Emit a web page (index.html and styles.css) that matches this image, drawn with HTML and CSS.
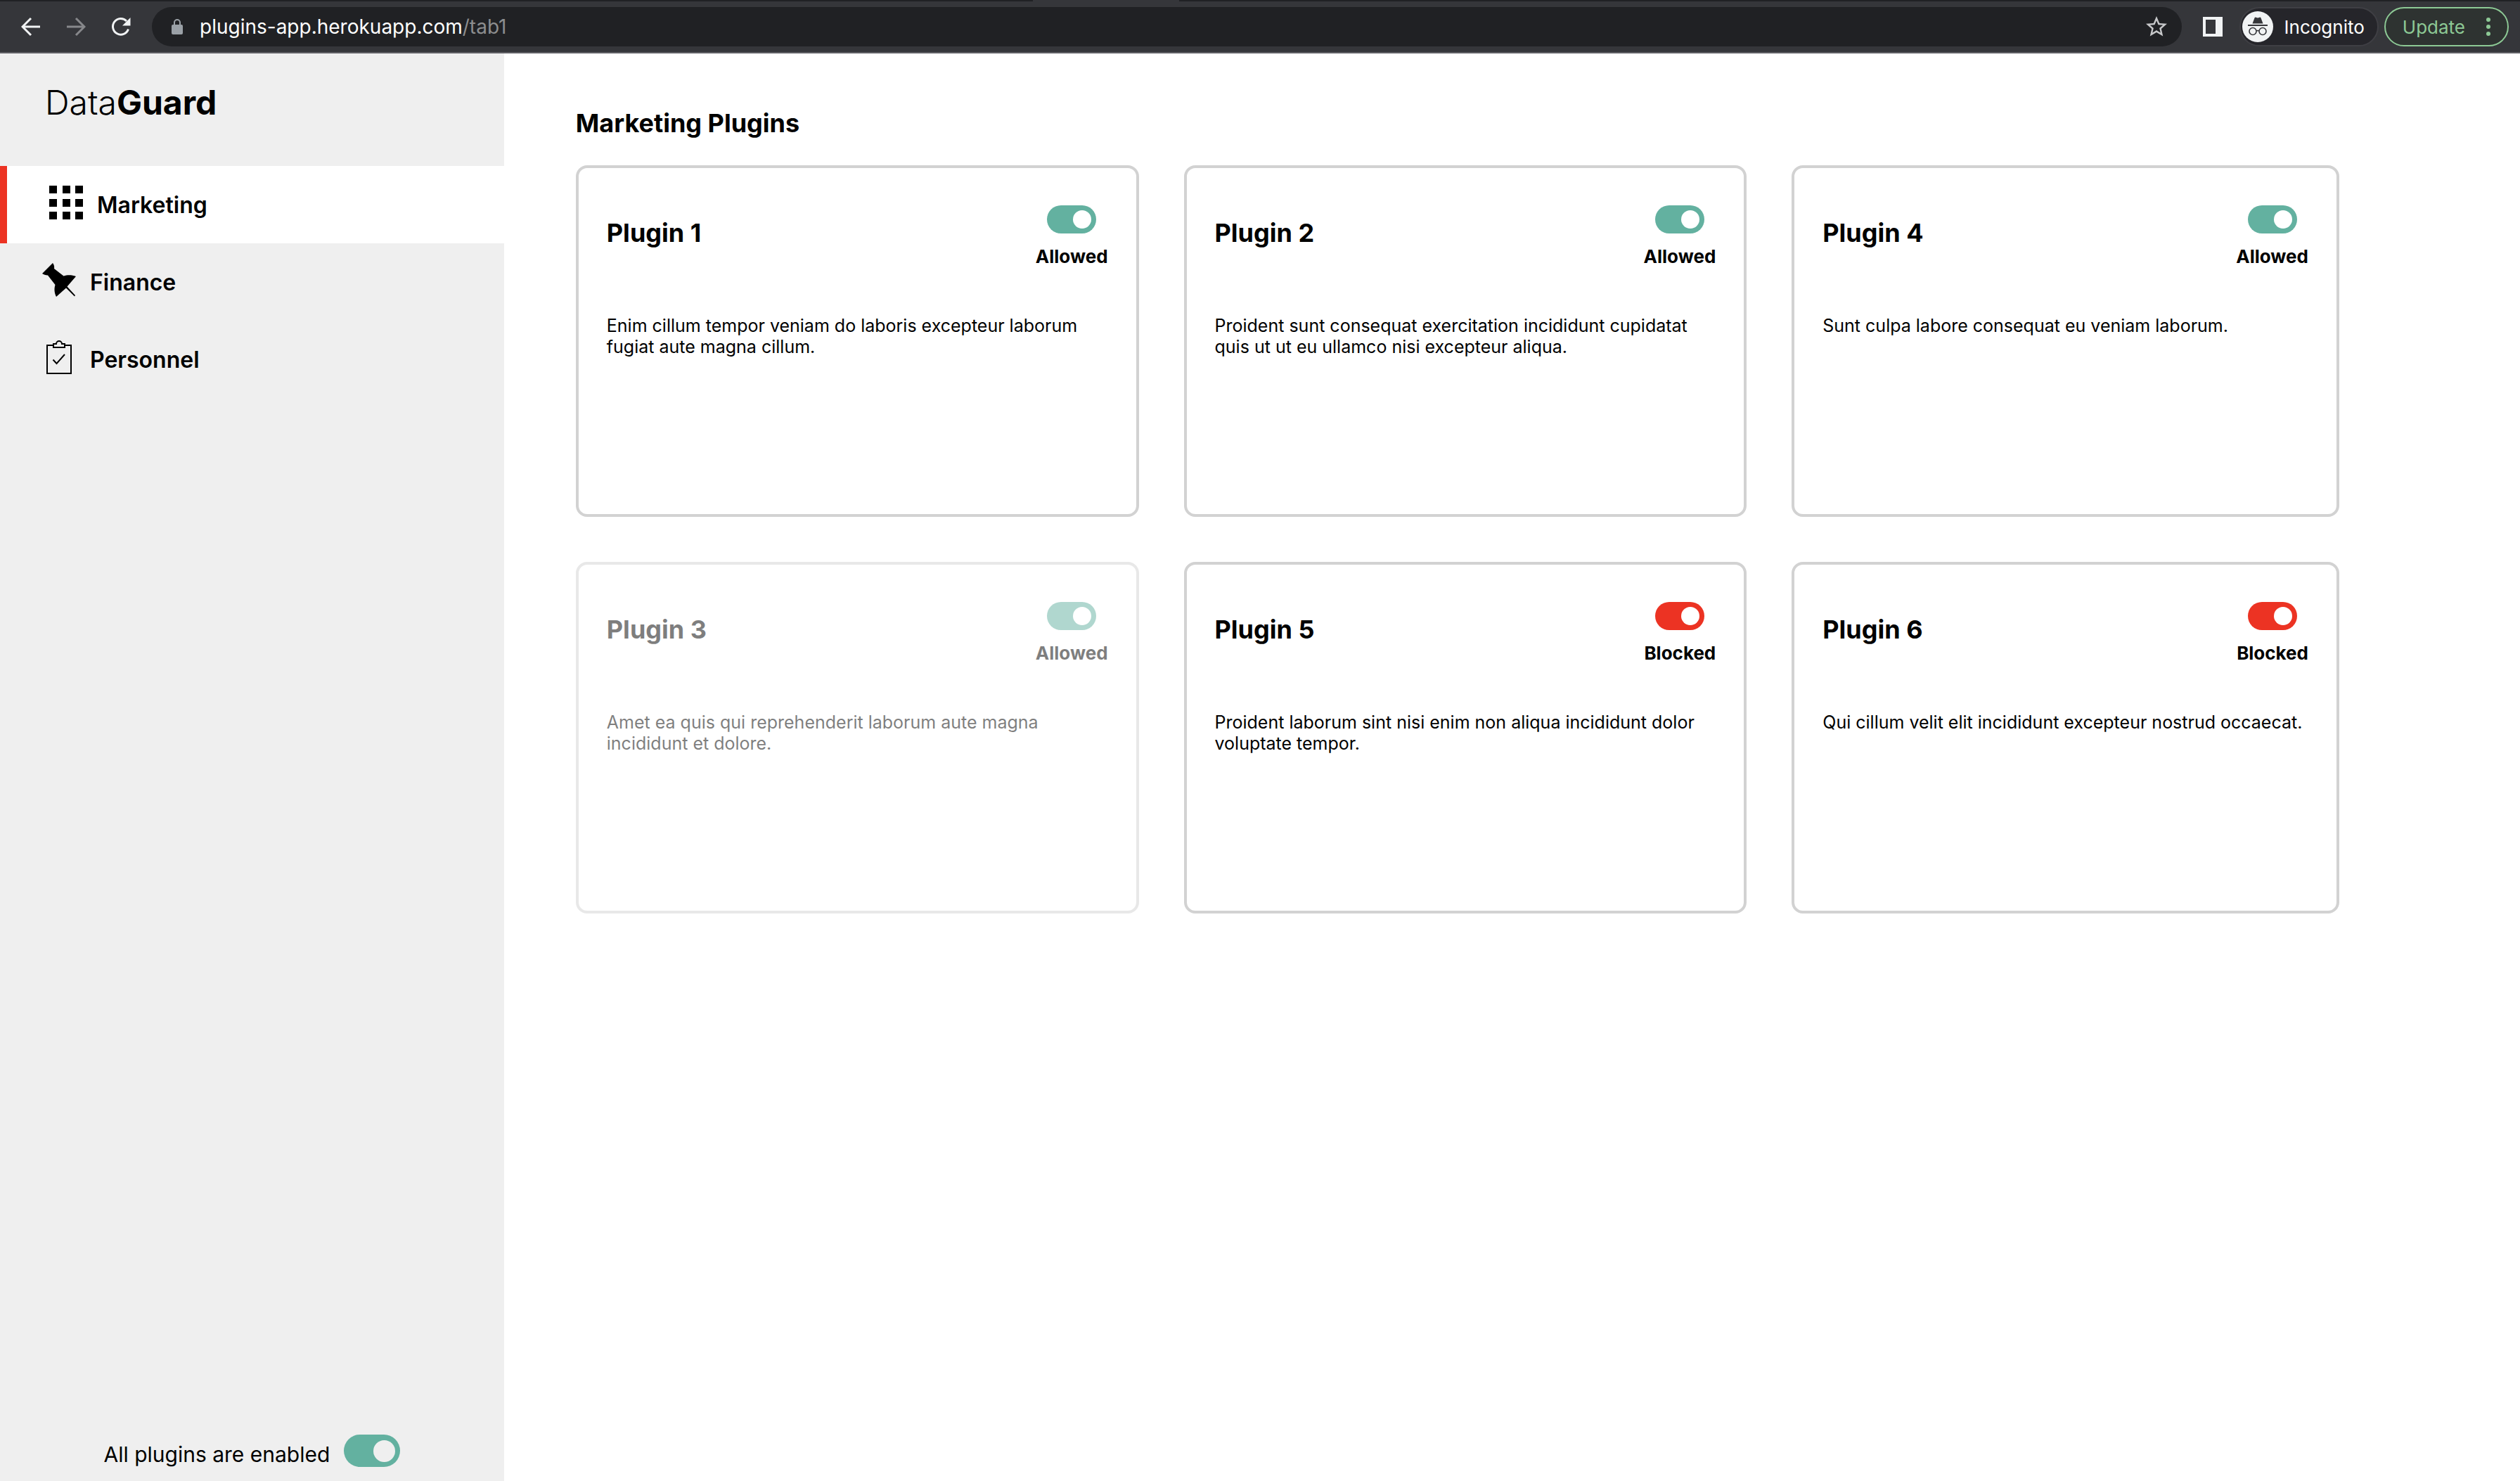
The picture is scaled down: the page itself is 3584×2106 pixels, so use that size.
FILE: index.html
```
<!DOCTYPE html>
<html lang="en">
<head>
<meta charset="utf-8">
<title>DataGuard</title>
<link rel="stylesheet" href="styles.css">
</head>
<body>
<div class="tab-strip"><div class="active-tab"></div></div>
<header class="browser">
  <div class="nav-buttons">
    <button class="icon-btn" aria-label="Back"><svg viewBox="0 0 28 28"><path d="M27 14H3M14 2 2 14l12 12"/></svg></button>
    <button class="icon-btn dim" aria-label="Forward"><svg viewBox="0 0 28 28"><path d="M1 14h24M14 2l12 12-12 12"/></svg></button>
    <button class="icon-btn" aria-label="Reload"><svg viewBox="0 0 28 28"><path d="M24.500 17.500A11.300 11.300 0 1 1 22 6"/><path class="solid" d="M27.500 1v11.500H16z"/></svg></button>
  </div>
  <div class="omnibox">
    <svg class="lock" viewBox="0 0 16 22"><path fill="#9aa0a6" d="M2 8h12a2 2 0 0 1 2 2v10a2 2 0 0 1-2 2H2a2 2 0 0 1-2-2V10a2 2 0 0 1 2-2z"/><path fill="none" stroke="#9aa0a6" stroke-width="2" d="M4 9V5a4 4 0 0 1 8 0v4"/></svg>
    <span class="url">plugins-app.herokuapp.com<span class="path">/tab1</span></span>
    <button class="star" aria-label="Bookmark this tab"><svg viewBox="0 0 24 24"><path fill="#c7c8ca" d="M22 9.240l-7.190-.620L12 2 9.190 8.630 2 9.240l5.460 4.730L5.820 21 12 17.270 18.180 21l-1.630-7.030zM12 15.400l-3.760 2.270 1-4.280-3.320-2.880 4.380-.380L12 6.100l1.710 4.040 4.380.380-3.320 2.880 1 4.280z"/></svg></button>
  </div>
  <button class="panel" aria-label="Side panel"><svg viewBox="0 0 28 28"><path fill="#f1f3f4" fill-rule="evenodd" d="M0 0h28v28H0zM4 4v20h14V4z"/></svg></button>
  <div class="profile">
    <svg viewBox="0 0 44 44"><circle cx="22" cy="22" r="22" fill="#f1f3f4"/><path fill="#35363a" d="M14.500 17.500l3-8q.500-1.200 2-.800l2.500.800 2.500-.800q1.500-.400 2 .800l3 8zM8 19h28v2H8z"/><g fill="none" stroke="#35363a" stroke-width="1.600"><circle cx="15" cy="28.500" r="5"/><circle cx="29" cy="28.500" r="5"/><path d="M20 28q2-1 4 0"/></g></svg>
    <span>Incognito</span>
  </div>
  <button class="update"><span>Update</span><svg viewBox="0 0 6 26"><circle cx="3" cy="3" r="3"/><circle cx="3" cy="13" r="3"/><circle cx="3" cy="23" r="3"/></svg></button>
</header>
<div class="app">
  <aside class="sidebar">
    <div class="logo">Data<b>Guard</b></div>
    <nav class="menu">
      <a class="active" href="#marketing"><svg viewBox="0 0 48 48"><path d="M0 0h11v11H0zM19 0h11v11H19zM37 0h11v11H37zM0 19h11v11H0zM19 19h11v11H19zM37 19h11v11H37zM0 37h11v11H0zM19 37h11v11H19zM37 37h11v11H37z"/></svg>Marketing</a>
      <a href="#finance"><svg viewBox="0 0 48 48"><path d="M15 0C17 3 17.500 5 17 8L30.500 18.500C36 16.500 43 17 48 19L35.500 33.500 47 46 46 47.500 34 35.500 20 48C17 42 17 36 18.500 31L8 17.500C5 17.500 2 16.500 0 15z"/></svg>Finance</a>
      <a href="#personnel"><svg viewBox="0 0 48 48"><g fill="none" stroke="#000" stroke-width="2"><path d="M16 7H7v40h34V7h-9"/><path d="M16 5h4a4 4 0 0 1 8 0h4v5H16z"/><path d="M15.500 27.500l5 5.500L32 20"/></g></svg>Personnel</a>
    </nav>
    <label class="all"><span>All plugins are enabled</span><input type="checkbox" class="toggle large" checked></label>
  </aside>
  <main class="content">
    <h1>Marketing Plugins</h1>
    <div class="cards">
      <article class="card"><div class="card-head"><h2>Plugin 1</h2><label class="state"><input type="checkbox" class="toggle" checked>Allowed</label></div><p>Enim cillum tempor veniam do laboris excepteur laborum fugiat aute magna cillum.</p></article>
      <article class="card"><div class="card-head"><h2>Plugin 2</h2><label class="state"><input type="checkbox" class="toggle" checked>Allowed</label></div><p>Proident sunt consequat exercitation incididunt cupidatat quis ut ut eu ullamco nisi excepteur aliqua.</p></article>
      <article class="card"><div class="card-head"><h2>Plugin 4</h2><label class="state"><input type="checkbox" class="toggle" checked>Allowed</label></div><p>Sunt culpa labore consequat eu veniam laborum.</p></article>
      <article class="card disabled"><div class="card-head"><h2>Plugin 3</h2><label class="state"><input type="checkbox" class="toggle" checked disabled>Allowed</label></div><p>Amet ea quis qui reprehenderit laborum aute magna incididunt et dolore.</p></article>
      <article class="card"><div class="card-head"><h2>Plugin 5</h2><label class="state"><input type="checkbox" class="toggle blocked">Blocked</label></div><p>Proident laborum sint nisi enim non aliqua incididunt dolor voluptate tempor.</p></article>
      <article class="card"><div class="card-head"><h2>Plugin 6</h2><label class="state"><input type="checkbox" class="toggle blocked">Blocked</label></div><p>Qui cillum velit elit incididunt excepteur nostrud occaecat.</p></article>
    </div>
  </main>
</div>
</body>
</html>
```
FILE: styles.css
```
* { box-sizing: border-box; }
body {
  margin: 0;
  min-height: 100vh;
  display: flex;
  flex-direction: column;
  font-family: Inter, "Liberation Sans", sans-serif;
  color: #000;
  background: #fff;
}
button { border: 0; padding: 0; background: none; font: inherit; color: inherit; }
svg { display: block; }

.tab-strip { height: 2px; padding-left: 41%; background: #202124; }
.active-tab { width: 208px; height: 2px; background: #35363a; }
.browser {
  display: flex;
  align-items: center;
  height: 74px;
  padding: 0 16px 0 30px;
  border-bottom: 2px solid #5f5f64;
  background: #35363a;
  color: #fff;
  font-size: 26px;
}
.nav-buttons { display: flex; gap: 36px; margin-right: 30px; }
.icon-btn svg {
  width: 28px;
  height: 28px;
  fill: none;
  stroke: #f1f3f4;
  stroke-width: 3;
}
.icon-btn .solid { fill: #f1f3f4; stroke: none; }
.icon-btn.dim svg { stroke: #87888b; }
.omnibox {
  flex: 1;
  display: flex;
  align-items: center;
  height: 56px;
  padding: 0 18px 0 28px;
  border-radius: 28px;
  background: #202124;
}
.lock { width: 16px; height: 22px; }
.url { flex: 1; margin-left: 24px; font-size: 28px; }
.path { color: #8c8d8f; }
.star svg { width: 36px; height: 36px; }
.panel { margin-left: 30px; }
.panel svg { width: 28px; height: 28px; }
.profile {
  display: flex;
  align-items: center;
  gap: 16px;
  height: 56px;
  margin-left: 24px;
  padding: 0 18px 0 2px;
  border: 2px solid #3f3f44;
  border-radius: 28px;
  background: #25252a;
}
.profile svg { width: 44px; height: 44px; }
.update {
  display: flex;
  align-items: center;
  gap: 30px;
  height: 56px;
  margin-left: 8px;
  padding: 0 24px;
  border: 2px solid #8dc995;
  border-radius: 28px;
  background: #2e3331;
  color: #8dc995;
}
.update svg { width: 6px; height: 26px; fill: #8dc995; }

.app { flex: 1; display: flex; }
.sidebar {
  flex: none;
  width: 20%;
  display: flex;
  flex-direction: column;
  background: #efefef;
}
.logo { padding: 40px 64px 60px; font-size: 48px; line-height: 60px; font-weight: 300; }
.logo b { font-weight: 700; }
.menu a {
  display: flex;
  align-items: center;
  gap: 20px;
  height: 110px;
  padding: 0 60px;
  color: #000;
  font-size: 32px;
  font-weight: 600;
  text-decoration: none;
}
.menu a.active { border-left: 10px solid #ec3323; background: #fff; }
.menu svg { width: 48px; height: 48px; margin-bottom: 6px; }
.all {
  display: flex;
  justify-content: center;
  align-items: flex-end;
  gap: 20px;
  margin-top: auto;
  padding-bottom: 20px;
  font-size: 30px;
  line-height: 36px;
}

.toggle {
  appearance: none;
  display: flex;
  align-items: center;
  justify-content: flex-end;
  width: 70px;
  height: 40px;
  margin: 0;
  padding: 0 7px;
  border-radius: 20px;
  background: #63b1a0;
}
.toggle::before { content: ""; width: 26px; height: 26px; border-radius: 50%; background: #fff; }
.toggle.blocked { background: #ec3323; }
.toggle.large { width: 80px; height: 46px; border-radius: 23px; }
.toggle.large::before { width: 31px; height: 31px; background: #efefef; }

.content { flex: 1; padding: 76px 257px 64px 102px; }
h1, h2 { margin: 0; font-size: 36px; line-height: 46px; font-weight: 700; }
h1 { margin-bottom: 37px; }
.cards {
  display: grid;
  grid-template-columns: 800fr 800fr 778fr;
  gap: 64px;
}
.card {
  min-height: 500px;
  padding: 53px 40px;
  border: 4px solid #d2d2d2;
  border-radius: 16px;
}
.card.disabled { opacity: 0.5; }
.card-head { display: flex; justify-content: space-between; align-items: flex-start; }
.card h2 { margin-top: 16px; }
.state {
  display: flex;
  flex-direction: column;
  align-items: center;
  gap: 18px;
  font-size: 26px;
  line-height: 30px;
  font-weight: 700;
}
.card p { margin: 68px 0 0; font-size: 25px; line-height: 30px; }
```
